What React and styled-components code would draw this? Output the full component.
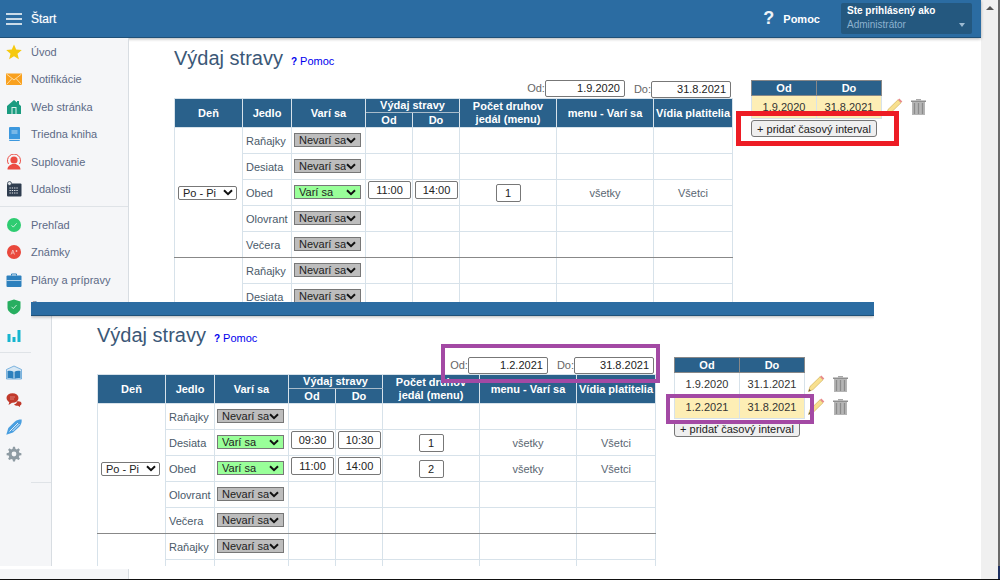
import React from "react";
import styled, { createGlobalStyle } from "styled-components";

const GlobalStyle = createGlobalStyle`
  html, body {
    margin: 0;
    padding: 0;
    background: #fff;
    font-family: "Liberation Sans", Arial, sans-serif;
    font-size: 11px;
  }
  * {
    box-sizing: border-box;
  }
`;

const blue = `#2b6ca2`;
const tableBlue = `#2a618b`;
const cellLine = `#d7e2ea`;
const chevron = `url("data:image/svg+xml,%3Csvg xmlns='http://www.w3.org/2000/svg' width='10' height='7'%3E%3Cpath d='M1 1.200l4 4 4-4' fill='none' stroke='%23111' stroke-width='2'/%3E%3C/svg%3E")`;

const Screen = styled.div`
  position: relative;
  display: flex;
  width: 1000px;
  height: 580px;
  overflow: hidden;
  border-bottom: 1px solid #111;
`;

const Shot = styled.div`
  width: 981px;
  display: flex;
  flex-direction: column;
`;

const Header = styled.header`
  height: 38px;
  flex: none;
  display: flex;
  align-items: center;
  padding: 0 9px 0 6px;
  background: ${blue};
  border-bottom: 1px solid #1f5077;
  box-shadow: 0 1px 3px rgba(0, 0, 0, 0.3);
  color: #fff;
  position: relative;
`;

const Brand = styled.span`
  margin-left: 9px;
  font-size: 12px;
  text-shadow: 0 0 1px rgba(255, 255, 255, 0.5);
`;

const HelpLink = styled.div`
  margin-left: auto;
  display: flex;
  align-items: center;
  gap: 9px;
  font-weight: bold;
  margin-right: 21px;
`;

const HelpMark = styled.span`
  font-size: 18px;
  color: #eef3f7;
`;

const LoginBox = styled.div`
  position: relative;
  width: 131px;
  height: 31px;
  padding: 2px 6px;
  background: #24587f;
  border-radius: 2px;
  font-size: 10px;
`;

const LoginTitle = styled.div`
  font-weight: bold;
  line-height: 12px;
`;

const LoginRole = styled.div`
  margin-top: 2px;
  line-height: 12px;
  color: #8db2cf;
`;

const LoginCaret = styled.span`
  position: absolute;
  right: 7px;
  bottom: 7px;
  border-left: 3.5px solid transparent;
  border-right: 3.5px solid transparent;
  border-top: 4px solid #9dbbd2;
`;

const Body = styled.div`
  flex: 1;
  display: flex;
  min-height: 0;
`;

const Sidebar = styled.nav`
  position: relative;
  width: 129px;
  flex: none;
  background: #f5f6f8;
  border-right: 1px solid #d8dde2;
`;

const SidebarNotch = styled.div`
  position: absolute;
  left: 0;
  right: -1px;
  bottom: 10px;
  height: 3px;
  background: #fff;
`;

const NavGroup = styled.div`
  padding: ${({ $top }) => $top}px 0 3px;
  border-bottom: ${({ $last }) => ($last ? `none` : `1px solid #dfe3e7`)};
`;

const NavRow = styled.div`
  height: ${({ $tall }) => ($tall ? 27.5 : 27)}px;
  display: flex;
  align-items: center;
  gap: 9px;
  padding-left: 6px;
  color: #5c6a86;
  white-space: nowrap;
`;

const NavIcon = styled.svg`
  width: 16px;
  height: 16px;
  flex: none;
`;

const Main = styled.main`
  flex: 1;
  min-width: 0;
  padding-left: 45px;
  overflow: hidden;
`;

const TitleRow = styled.div`
  height: ${({ $compact }) => ($compact ? 38 : 40)}px;
  display: flex;
  align-items: center;
  gap: 8px;
`;

const Title = styled.h1`
  margin: 0;
  font-size: 20px;
  font-weight: normal;
  color: #3b5877;
`;

const PageHelp = styled.a`
  color: #0000ee;
  display: flex;
  align-items: baseline;
  gap: 3px;
  margin-top: 5px;
`;

const PageHelpMark = styled.b`
  font-size: 10px;
`;

const Columns = styled.div`
  display: flex;
  align-items: flex-start;
  gap: 18px;
  margin-top: ${({ $compact }) => ($compact ? 3 : 2)}px;
`;

const LeftColumn = styled.div`
  width: 559px;
  flex: none;
`;

const DateRow = styled.div`
  height: ${({ $compact }) => ($compact ? 17 : 18)}px;
  display: flex;
  justify-content: flex-end;
  padding-right: 2px;
  color: #666;
`;

const DateLabel = styled.div`
  display: flex;
  align-items: flex-start;
  line-height: 17px;
  margin-left: 9px;
  margin-top: ${({ $drop }) => ($drop ? 1 : 0)}px;
`;

const Field = styled.div`
  height: ${({ $h }) => $h}px;
  width: ${({ $w }) => $w}px;
  border: 1px solid #777;
  border-radius: 2px;
  background: #fff;
  color: #222;
  line-height: ${({ $h }) => $h - 2}px;
  text-align: ${({ $right }) => ($right ? `right` : `center`)};
  padding-right: ${({ $right }) => ($right ? 4 : 0)}px;
`;

const MealTable = styled.table`
  width: 558px;
  table-layout: fixed;
  border-collapse: collapse;
`;

const Head = styled.th`
  height: ${({ $h }) => $h}px;
  padding: 0;
  background: ${tableBlue};
  border: 1px solid ${cellLine};
  border-bottom-color: ${({ $sub }) => ($sub ? `#a9bccb` : cellLine)};
  color: #fff;
  font-size: 11px;
  line-height: 13px;
  font-weight: bold;
  text-align: center;
`;

const Group = styled.tbody`
  tr:last-child td,
  td[rowspan] {
    border-bottom-color: #888;
  }
`;

const Cell = styled.td`
  height: 26px;
  padding: 0;
  border: 1px solid ${cellLine};
  color: ${({ $muted }) => ($muted ? `#5a6672` : `#4a5a6a`)};
  text-align: ${({ $center }) => ($center ? `center` : `left`)};
  padding-left: ${({ $center }) => ($center ? 0 : 3)}px;
`;

const InputCell = styled.td`
  height: 26px;
  padding: ${({ $pad }) => $pad};
  border: 1px solid ${cellLine};
  vertical-align: ${({ $middle }) => ($middle ? `middle` : `top`)};
`;

const StatusSelect = styled.select`
  display: block;
  width: 67px;
  height: 14px;
  padding: 0 14px 0 4px;
  appearance: none;
  font-family: inherit;
  font-size: 11px;
  line-height: 12px;
  color: #222;
  border: 1px solid #777;
  border-radius: 0;
  background: ${({ $on }) => ($on ? `#99ff99` : `#bdbdbd`)} ${chevron} no-repeat right 4px center;
`;

const DaySelect = styled.select`
  display: block;
  width: 59px;
  height: 14px;
  margin-left: 3px;
  padding: 0 14px 0 4px;
  appearance: none;
  font-family: inherit;
  font-size: 11px;
  line-height: 12px;
  color: #222;
  background: #fff ${chevron} no-repeat right 3px center;
  border: 1px solid #777;
  border-radius: 2px;
`;

const CountWrap = styled.div`
  display: flex;
  justify-content: center;
`;

const RightColumn = styled.div`
  flex: none;
`;

const IntervalWrap = styled.div`
  display: flex;
`;

const IntervalTable = styled.table`
  width: 131px;
  table-layout: fixed;
  border-collapse: collapse;
`;

const IntervalHead = styled.th`
  height: 15px;
  padding: 0;
  background: ${tableBlue};
  border: 1px solid #888;
  color: #fff;
  font-size: 11px;
  line-height: 13px;
`;

const IntervalCell = styled.td`
  height: 23px;
  padding: 0;
  border: 1px solid ${cellLine};
  background: ${({ $active }) => ($active ? `#fdeeb5` : `#fff`)};
  color: #333;
  text-align: center;
`;

const Tools = styled.div`
  padding-top: 15px;
`;

const ToolRow = styled.div`
  height: 23px;
  display: flex;
  align-items: center;
  gap: 8px;
  padding-left: ${({ $compact }) => ($compact ? 3 : 4)}px;
`;

const AddButton = styled.button`
  display: block;
  width: 126px;
  height: 17px;
  margin-top: 1px;
  padding: 0;
  font-family: inherit;
  font-size: 11px;
  line-height: 14px;
  color: #222;
  background: #efefef;
  border: 1px solid #767676;
  border-radius: 3px;
`;

const Scrollbar = styled.div`
  width: 17px;
  flex: none;
  background: #f0f0f0;
  display: flex;
  justify-content: center;
  padding-top: 6px;
`;

const ScrollArrow = styled.span`
  width: 0;
  height: 0;
  border-left: 4px solid transparent;
  border-right: 4px solid transparent;
  border-bottom: 4px solid #555;
`;

const Edge = styled.div`
  width: 2px;
  flex: none;
  background: linear-gradient(#6a6a6a 566px, #1d2f5f 566px);
`;

const Pasted = styled.section`
  position: absolute;
  left: 31px;
  top: 302px;
  width: 843px;
  height: 264px;
  background: #fff;
  display: flex;
  flex-direction: column;
  overflow: hidden;
`;

const PastedStrip = styled.div`
  height: 14px;
  flex: none;
  background: ${blue};
  border-bottom: 1px solid #1f5077;
  box-shadow: 0 1px 3px rgba(0, 0, 0, 0.3);
  position: relative;
`;

const PastedSidebar = styled.div`
  width: 21px;
  flex: none;
  background: #f5f6f8;
  border-right: 1px solid #d8dde2;
`;

const PastedRule = styled.div`
  height: 167px;
  border-bottom: 1px solid #dfe3e7;
`;

const Callout = styled.div`
  position: absolute;
  left: ${({ $x }) => $x}px;
  top: ${({ $y }) => $y}px;
  width: ${({ $w }) => $w}px;
  height: ${({ $h }) => $h}px;
  border: ${({ $line }) => $line}px solid ${({ $color }) => $color};
`;

const Burger = () => (
  <svg width="16" height="12" viewBox="0 0 16 12">
    <path d="M0 1h16M0 6h16M0 11h16" stroke="#fff" strokeWidth="1.4" />
  </svg>
);

const icons = {
  star: (
    <polygon
      points="8,0.5 10.2,5.6 15.8,6.1 11.5,9.8 12.9,15.2 8,12.3 3.1,15.2 4.5,9.8 0.2,6.1 5.8,5.6"
      fill="#f6c90e"
    />
  ),
  mail: (
    <>
      <rect x="0" y="2.5" width="16" height="11.5" fill="#f9a11f" />
      <path d="M0.5 3L8 9l7.5-6M0.5 13.5L6 7.5M15.5 13.5L10 7.5" stroke="#fde3b5" strokeWidth="0.9" fill="none" />
    </>
  ),
  home: (
    <>
      <path d="M8 1L1 7v8h14V7l-2-1.8V2h-2v1.5z" fill="#1a9c80" />
      <rect x="5.5" y="8" width="5" height="7" fill="#dff3ee" />
      <rect x="6.5" y="9" width="3" height="6" fill="#1a9c80" />
    </>
  ),
  book: (
    <>
      <rect x="3" y="1" width="11" height="14" rx="1" fill="#3c98de" />
      <path d="M5.5 5h6M5.5 7h6" stroke="#d5e9f8" strokeWidth="0.8" />
      <rect x="3" y="13" width="11" height="1" fill="#cfe5f6" />
    </>
  ),
  person: (
    <>
      <path d="M2.5 10A6.5 6.5 0 1 1 13.5 10" stroke="#ec4c43" strokeWidth="1" fill="none" />
      <circle cx="8" cy="6" r="3.6" fill="#ec4c43" />
      <path d="M1.5 15.5c0-3.5 3-4.5 4.5-5.5h4c1.500 1 4.500 2 4.500 5.500z" fill="#ec4c43" />
    </>
  ),
  calendar: (
    <>
      <rect x="1" y="2.500" width="14.500" height="13" rx="1" fill="#2f3d4f" />
      <circle cx="3.500" cy="2.500" r="2" fill="#dfe3e7" stroke="#2f3d4f" strokeWidth="0.8" />
      <path d="M3.500 7h9M3.500 9.500h9M3.500 12h9" stroke="#e8ebee" strokeWidth="1.200" strokeDasharray="1.300 1" />
    </>
  ),
  check: (
    <>
      <circle cx="8" cy="8" r="7" fill="#2ecc71" />
      <path d="M5.500 8.300l1.800 1.800 3.400-3.800" stroke="#d6f5e3" strokeWidth="0.9" fill="none" />
    </>
  ),
  grade: (
    <>
      <circle cx="8" cy="8" r="7" fill="#e9483c" />
      <path d="M5 10.500l1.800-4.500 1.700 4.500M6 9h1.700M10.500 6v2M9.500 7h2" stroke="#f8cbc6" strokeWidth="0.8" fill="none" />
    </>
  ),
  case: (
    <>
      <rect x="0.500" y="3.500" width="15" height="11.500" rx="1" fill="#2d80bd" />
      <path d="M5.500 3.500V2h5v1.500" stroke="#2d80bd" strokeWidth="1" fill="none" />
      <path d="M0.500 8.500h15" stroke="#cfe3f2" strokeWidth="0.800" />
    </>
  ),
  shield: (
    <>
      <path d="M8 0.500l6.500 2v6c0 3.500-3 5.800-6.500 7-3.500-1.200-6.500-3.500-6.500-7v-6z" fill="#27ae60" />
      <path d="M5.500 7.800l1.800 1.800 3.200-3.500" stroke="#d6f5e3" strokeWidth="0.9" fill="none" />
    </>
  ),
  bars: (
    <path d="M1.500 7h3v8h-3zM6.500 10h3v5h-3zM11.500 3h3v12h-3z" fill="#17b5cf" />
  ),
  open: (
    <>
      <path d="M0.500 4.500L8 1l7.500 3.500V14H0.500z" fill="#d8e8f4" stroke="#4d9ad4" strokeWidth="0.7" />
      <path d="M1.500 6c2.500-.6 4.500-.3 6 .8v7c-1.500-.8-3.500-1.100-6-.6zM14.500 6c-2.500-.6-4.500-.3-6 .8v7c1.500-.8 3.500-1.100 6-.6z" fill="#2d80bd" />
    </>
  ),
  chat: (
    <>
      <ellipse cx="6.500" cy="6" rx="6" ry="4.800" fill="#c0392b" />
      <path d="M3.500 9.500l-1 3.500 4-2.500z" fill="#c0392b" />
      <path d="M4 5h5M4 7h4" stroke="#e99a92" strokeWidth="0.7" />
      <path d="M11 9.500c2.500-.5 4.500.5 4.500 2 0 1-.7 1.700-1.500 2v1.500l-2-1.200c-1.700 0-3.500-.3-4-1.300 1.500-.3 3-1.500 3-3z" fill="#c0392b" />
    </>
  ),
  pen: (
    <>
      <path d="M0.300 15.700L2.300 9 9 2.500C11 .8 14 .3 15.700.5 16 4 14.500 6.500 13 8l-6 5.500z" fill="#4a9fe0" />
      <path d="M3.500 12.500L12 4M6.500 12L13.500 5" stroke="#f5f6f8" strokeWidth="0.900" />
    </>
  ),
  gear: (
    <>
      <path
        d="M7 0.800h2l.4 2 1.400.6 1.700-1.100 1.400 1.400-1.100 1.700.6 1.400 2 .4v2l-2 .4-.6 1.400 1.100 1.700-1.400 1.400-1.700-1.100-1.400.6-.4 2H7l-.4-2-1.400-.6-1.700 1.100-1.400-1.400 1.100-1.700-.6-1.400-2-.4v-2l2-.4.6-1.400-1.100-1.700 1.400-1.400 1.700 1.100 1.400-.6z"
        fill="#8e9ba3"
      />
      <circle cx="8" cy="8" r="2.400" fill="#f5f6f8" />
    </>
  )
};

const navGroups = [
  {
    top: 0,
    tall: true,
    items: [
      ["star", "Úvod"],
      ["mail", "Notifikácie"],
      ["home", "Web stránka"],
      ["book", "Triedna kniha"],
      ["person", "Suplovanie"],
      ["calendar", "Udalosti"]
    ]
  },
  {
    top: 4,
    tall: true,
    items: [
      ["check", "Prehľad"],
      ["grade", "Známky"],
      ["case", "Plány a prípravy"],
      ["shield", "Š"],
      ["bars", ""]
    ]
  },
  {
    top: 7,
    last: true,
    items: [
      ["open", ""],
      ["chat", ""],
      ["pen", ""],
      ["gear", ""]
    ]
  }
];

const PencilIcon = () => (
  <svg width="17" height="17" viewBox="0 0 17 17">
    <path d="M0.500 16.500L2 11.500 12 1.800l3 3-10 9.800z" fill="#f8e08e" stroke="#c9a84a" strokeWidth="0.600" />
    <path d="M12 1.800l1.300-1.300 3 3L15 4.800z" fill="#e88a8a" />
    <path d="M0.500 16.500L1.300 14l1.700 1.700z" fill="#6b5c3c" />
  </svg>
);

const TrashIcon = () => (
  <svg width="15" height="16" viewBox="0 0 15 16">
    <path d="M0 1.500h15v1.500H0z" fill="#8f8f8f" />
    <path d="M5 0h5v1.500H5z" fill="#a8a8a8" />
    <path d="M1 3h13v13H1z" fill="#b5b5b5" />
    <path d="M3.500 4v11M7.500 4v11M11.500 4v11" stroke="#8b8b8b" strokeWidth="1.300" />
  </svg>
);

const meals = ["Raňajky", "Desiata", "Obed", "Olovrant", "Večera"];
const widths = [68, 49, 74, 47, 47, 97, 97, 79];

const MealRow = ({ meal, day, span, data }) => (
  <tr>
    {day && (
      <InputCell rowSpan={span} $pad="0" $middle>
        {day === "Po - Pi" && (
          <DaySelect defaultValue="Po - Pi">
            <option>Po - Pi</option>
          </DaySelect>
        )}
      </InputCell>
    )}
    <Cell>{meal}</Cell>
    <InputCell $pad="5px 0 0 2px">
      {meal && (
        <StatusSelect $on={!!data} defaultValue={data ? "Varí sa" : "Nevarí sa"}>
          <option>{data ? "Varí sa" : "Nevarí sa"}</option>
        </StatusSelect>
      )}
    </InputCell>
    <InputCell $pad="1px 0 0 2px">{data && <Field $w={43} $h={18}>{data.from}</Field>}</InputCell>
    <InputCell $pad="1px 0 0 2px">{data && <Field $w={43} $h={18}>{data.to}</Field>}</InputCell>
    <InputCell $pad="4px 0 0 0">
      {data && (
        <CountWrap>
          <Field $w={25} $h={18}>{data.count}</Field>
        </CountWrap>
      )}
    </InputCell>
    <Cell $center $muted>{data && "všetky"}</Cell>
    <Cell $center $muted>{data && "Všetci"}</Cell>
  </tr>
);

const View = ({ compact, from, to, served, nextDay, intervals, activeRow }) => (
  <Main>
    <TitleRow $compact={compact}>
      <Title>Výdaj stravy</Title>
      <PageHelp>
        <PageHelpMark>?</PageHelpMark> Pomoc
      </PageHelp>
    </TitleRow>
    <Columns $compact={compact}>
      <LeftColumn>
        <DateRow $compact={compact}>
          <DateLabel>
            Od:<Field $w={80} $h={17} $right>{from}</Field>
          </DateLabel>
          <DateLabel $drop={!compact}>
            Do:<Field $w={80} $h={17} $right>{to}</Field>
          </DateLabel>
        </DateRow>
        <MealTable>
          <colgroup>
            {widths.map((w, i) => (
              <col key={i} width={w} />
            ))}
          </colgroup>
          <thead>
            <tr>
              <Head rowSpan={2} $h={29}>Deň</Head>
              <Head rowSpan={2} $h={29}>Jedlo</Head>
              <Head rowSpan={2} $h={29}>Varí sa</Head>
              <Head colSpan={2} $h={14} $sub>Výdaj stravy</Head>
              <Head rowSpan={2} $h={29}>Počet druhov<br />jedál (menu)</Head>
              <Head rowSpan={2} $h={29}>menu - Varí sa</Head>
              <Head rowSpan={2} $h={29}>Vídia platitelia</Head>
            </tr>
            <tr>
              <Head $h={15}>Od</Head>
              <Head $h={15}>Do</Head>
            </tr>
          </thead>
          <Group>
            {meals.map((meal, i) => (
              <MealRow key={meal} meal={meal} day={i === 0 ? "Po - Pi" : null} span={5} data={served[meal]} />
            ))}
          </Group>
          <Group>
            {nextDay.map((meal, i) => (
              <MealRow key={i} meal={meal} day={i === 0 ? "rest" : null} span={2} />
            ))}
          </Group>
        </MealTable>
      </LeftColumn>
      <RightColumn>
        <IntervalWrap>
          <IntervalTable>
            <thead>
              <tr>
                <IntervalHead>Od</IntervalHead>
                <IntervalHead>Do</IntervalHead>
              </tr>
            </thead>
            <tbody>
              {intervals.map(([a, b], i) => (
                <tr key={a}>
                  <IntervalCell $active={i === activeRow}>{a}</IntervalCell>
                  <IntervalCell $active={i === activeRow}>{b}</IntervalCell>
                </tr>
              ))}
            </tbody>
          </IntervalTable>
          <Tools>
            {intervals.map(([a]) => (
              <ToolRow key={a} $compact={compact}>
                <PencilIcon />
                <TrashIcon />
              </ToolRow>
            ))}
          </Tools>
        </IntervalWrap>
        <AddButton>+ pridať časový interval</AddButton>
      </RightColumn>
    </Columns>
  </Main>
);

const App = () => (
  <>
    <GlobalStyle />
    <Screen>
      <Shot>
        <Header>
          <Burger />
          <Brand>Štart</Brand>
          <HelpLink>
            <HelpMark>?</HelpMark>
            Pomoc
          </HelpLink>
          <LoginBox>
            <LoginTitle>Ste prihlásený ako</LoginTitle>
            <LoginRole>Administrátor</LoginRole>
            <LoginCaret />
          </LoginBox>
        </Header>
        <Body>
          <Sidebar>
            {navGroups.map((group, i) => (
              <NavGroup key={i} $top={group.top} $last={group.last}>
                {group.items.map(([icon, label]) => (
                  <NavRow key={icon} $tall={group.tall}>
                    <NavIcon viewBox="0 0 16 16">{icons[icon]}</NavIcon>
                    {label}
                  </NavRow>
                ))}
              </NavGroup>
            ))}
            <SidebarNotch />
          </Sidebar>
          <View
            from="1.9.2020"
            to="31.8.2021"
            served={{ Obed: { from: "11:00", to: "14:00", count: 1 } }}
            nextDay={["Raňajky", "Desiata"]}
            intervals={[["1.9.2020", "31.8.2021"]]}
            activeRow={0}
          />
        </Body>
      </Shot>
      <Scrollbar>
        <ScrollArrow />
      </Scrollbar>
      <Edge />
      <Pasted>
        <PastedStrip />
        <Body>
          <PastedSidebar>
            <PastedRule />
          </PastedSidebar>
          <View
            compact
            from="1.2.2021"
            to="31.8.2021"
            served={{
              Desiata: { from: "09:30", to: "10:30", count: 1 },
              Obed: { from: "11:00", to: "14:00", count: 2 }
            }}
            nextDay={["Raňajky", ""]}
            intervals={[
              ["1.9.2020", "31.1.2021"],
              ["1.2.2021", "31.8.2021"]
            ]}
            activeRow={1}
          />
        </Body>
      </Pasted>
      <Callout $x={736} $y={111} $w={163} $h={35} $line={5} $color="#ed1c24" />
      <Callout $x={441} $y={344} $w={219} $h={39} $line={4} $color="#a349a4" />
      <Callout $x={666} $y={394} $w={148} $h={30} $line={4} $color="#a349a4" />
    </Screen>
  </>
);

export default App;
